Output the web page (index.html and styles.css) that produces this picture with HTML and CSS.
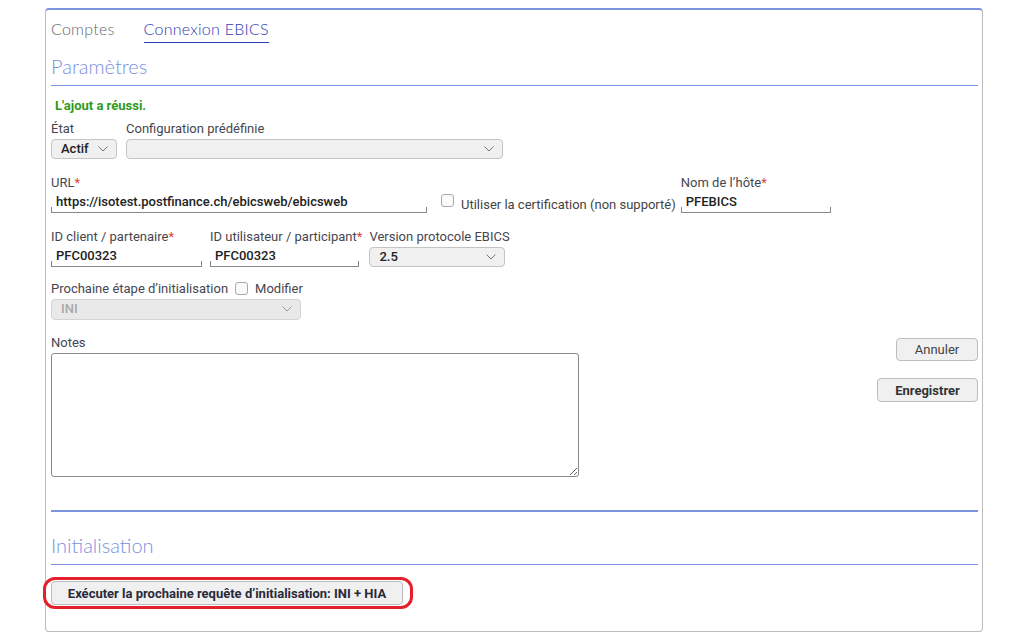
FILE: index.html
```html
<!DOCTYPE html>
<html lang="fr">
<head>
<meta charset="utf-8">
<title>Connexion EBICS</title>
<link rel="stylesheet" href="styles.css">
</head>
<body>
<div class="panel">
  <div class="tabs">
    <span class="tab">Comptes</span>
    <span class="tab active">Connexion EBICS</span>
  </div>
  <h2 class="section">Paramètres</h2>
  <p class="success">L'ajout a réussi.</p>

  <div class="row r1">
    <div class="field">
      <label class="lbl">État</label>
      <div class="select w-etat"><span class="val">Actif</span><svg class="chev" viewBox="0 0 10 6"><path d="M0.5 0.5 L5 5 L9.5 0.5"/></svg></div>
    </div>
    <div class="field">
      <label class="lbl">Configuration prédéfinie</label>
      <div class="select w-config"><span class="val"></span><svg class="chev" viewBox="0 0 10 6"><path d="M0.5 0.5 L5 5 L9.5 0.5"/></svg></div>
    </div>
  </div>

  <div class="row">
    <div class="field">
      <label class="lbl">URL<span class="req">*</span></label>
      <div class="input w-url">https://isotest.postfinance.ch/ebicsweb/ebicsweb</div>
    </div>
    <div class="field cert">
      <span class="check"></span><span class="cert-text">Utiliser la certification (non supporté)</span>
    </div>
    <div class="field">
      <label class="lbl">Nom de l’hôte<span class="req">*</span></label>
      <div class="input w-host">PFEBICS</div>
    </div>
  </div>

  <div class="row">
    <div class="field f-client">
      <label class="lbl">ID client / partenaire<span class="req">*</span></label>
      <div class="input w-client">PFC00323</div>
    </div>
    <div class="field f-user">
      <label class="lbl">ID utilisateur / participant<span class="req">*</span></label>
      <div class="input w-user">PFC00323</div>
    </div>
    <div class="field f-version">
      <label class="lbl">Version protocole EBICS</label>
      <div class="select w-version"><span class="val">2.5</span><svg class="chev" viewBox="0 0 10 6"><path d="M0.5 0.5 L5 5 L9.5 0.5"/></svg></div>
    </div>
  </div>

  <div class="row r4">
    <div class="field">
      <label class="lbl lbl-inline">Prochaine étape d’initialisation <span class="check"></span> Modifier</label>
      <div class="select disabled w-step"><span class="val">INI</span><svg class="chev" viewBox="0 0 10 6"><path d="M0.5 0.5 L5 5 L9.5 0.5"/></svg></div>
    </div>
  </div>

  <div class="row notes-row">
    <div class="field">
      <label class="lbl">Notes</label>
      <textarea class="notes"></textarea>
    </div>
    <div class="actions">
      <button class="btn btn-cancel">Annuler</button>
      <button class="btn btn-save">Enregistrer</button>
    </div>
  </div>

  <hr class="sep">
  <h2 class="section">Initialisation</h2>
  <div class="init">
    <button class="btn btn-init">Exécuter la prochaine requête d’initialisation: INI + HIA</button>
  </div>
</div>
</body>
</html>
```

FILE: styles.css
```css
html, body {
  margin: 0;
  padding: 0;
  background: #fff;
}
body {
  padding: 8px 0 0 45px;
  font-family: Roboto, "Liberation Sans", sans-serif;
  font-size: 13px;
  color: #444;
}
.panel {
  width: 927px;
  border: 1px solid #bcbcbc;
  border-top: 2px solid #7b93e0;
  border-radius: 4px;
  padding: 0 4px 26px 5px;
}
.tabs {
  display: flex;
  gap: 29px;
  margin-top: 9px;
}
.tab {
  font-family: Lato, "Open Sans", sans-serif;
  font-weight: 300;
  font-size: 16px;
  letter-spacing: 0.25px;
  line-height: 20px;
  padding-bottom: 3px;
  color: #666;
  border-bottom: 1px solid transparent;
}
.tab.active {
  color: #2b3cb5;
  border-bottom-color: #2b3cb5;
}
.section {
  margin: 11px 0 0;
  font-family: Lato, "Open Sans", sans-serif;
  font-weight: 300;
  font-size: 20px;
  line-height: 24px;
  color: #7b8fe0;
  padding-bottom: 7px;
  border-bottom: 1px solid #7b93e0;
}
.success {
  margin: 11px 0 0 4px;
  font-weight: 700;
  color: #2e9a1e;
  line-height: 17px;
}
.row {
  display: flex;
  align-items: flex-end;
  margin-top: 15px;
}
.row.r1 {
  margin-top: 6px;
}
.row.r4 {
  margin-top: 13px;
}
.field {
  display: flex;
  flex-direction: column;
  margin-right: 9px;
}
.lbl {
  line-height: 17px;
  margin-bottom: 2px;
  color: #464650;
}
.lbl-inline {
  display: flex;
  align-items: center;
  gap: 7px;
}
.req {
  color: #e0413a;
}
.select {
  position: relative;
  box-sizing: border-box;
  height: 20px;
  background: #f0f0f0;
  border: 1px solid #c4c4c4;
  border-radius: 4px;
  padding: 0 24px 0 9px;
  line-height: 18px;
  color: #222;
  font-weight: 500;
}
.select .chev {
  position: absolute;
  right: 8px;
  top: 6px;
  width: 10px;
  height: 6px;
  fill: none;
  stroke: #777;
  stroke-width: 1;
}
.select.disabled {
  background: #e9e9e9;
  border-color: #d4d4d4;
  color: #a8a8a8;
}
.select.disabled .chev {
  stroke: #999;
}
.w-etat { width: 66px; }
.w-config { width: 377px; }
.w-version { width: 136px; }
.w-step { width: 250px; height: 21px; }
.input {
  box-sizing: border-box;
  height: 20px;
  line-height: 18px;
  padding: 0 5px;
  color: #222;
  font-weight: 500;
  border-bottom: 1px solid #888;
  background:
    linear-gradient(#888, #888) left bottom / 1px 5px no-repeat,
    linear-gradient(#888, #888) right bottom / 1px 5px no-repeat;
}
.w-url { width: 376px; }
.w-host { width: 150px; }
.w-client { width: 151px; }
.w-user { width: 149px; }
.f-client { margin-right: 8px; }
.f-user { margin-right: 7px; }
.cert {
  flex-direction: row;
  align-items: center;
  margin: 0 5px 0 5px;
  height: 22px;
}
.cert-text {
  margin-left: 7px;
  padding-top: 4px;
}
.check {
  display: inline-block;
  box-sizing: border-box;
  width: 13px;
  height: 13px;
  border: 1px solid #a9a9a9;
  border-radius: 3px;
  background: #fafafa;
}
.cert .check {
  margin-bottom: 4px;
}
.notes-row {
  margin-top: 14px;
  align-items: flex-start;
  justify-content: space-between;
}
.notes {
  display: block;
  box-sizing: border-box;
  width: 528px;
  height: 124px;
  margin: 0;
  border: 1px solid #8a8a8a;
  border-radius: 3px;
  resize: both;
  font: inherit;
}
.actions {
  display: flex;
  flex-direction: column;
  align-items: flex-end;
  gap: 17px;
  padding-top: 4px;
}
.btn {
  box-sizing: border-box;
  font-family: Roboto, "Liberation Sans", sans-serif;
  font-size: 13px;
  background: #f0f0f0;
  border: 1px solid #bdbdbd;
  border-radius: 4px;
  color: #333;
  padding: 0;
  cursor: pointer;
}
.btn-cancel {
  width: 82px;
  height: 23px;
  color: #444;
}
.btn-save {
  width: 101px;
  height: 24px;
  font-weight: 700;
}
.sep {
  margin: 33px 0 0;
  border: 0;
  height: 2px;
  background: #7b93e0;
}
.sep + .section {
  margin-top: 21px;
}
.init {
  margin-top: 16px;
}
.btn-init {
  position: relative;
  width: 352px;
  height: 24px;
  font-weight: 700;
  color: #2a2a3a;
}
.btn-init::after {
  content: "";
  position: absolute;
  top: -5px;
  bottom: -5px;
  left: -9px;
  right: -11px;
  border: 3px solid #e3202b;
  border-radius: 12px;
}
```
